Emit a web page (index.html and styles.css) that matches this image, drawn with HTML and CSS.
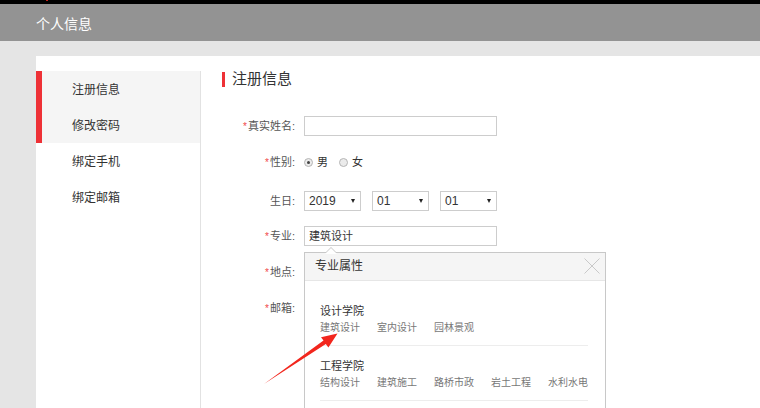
FILE: index.html
```html
<!DOCTYPE html>
<html lang="zh-CN">
<head>
<meta charset="utf-8">
<title>个人信息</title>
<link rel="stylesheet" href="styles.css">
</head>
<body>
<div class="topstrip"><span class="topmark"></span></div>
<header class="header">个人信息</header>
<div class="page">
  <div class="panel">
    <nav class="sidebar">
      <a class="nav-item active">注册信息</a>
      <a class="nav-item active">修改密码</a>
      <a class="nav-item">绑定手机</a>
      <a class="nav-item">绑定邮箱</a>
    </nav>
    <main class="main">
      <h2 class="title"><span class="title-bar"></span>注册信息</h2>
      <div class="form">
        <div class="row">
          <label class="label"><span class="star">*</span>真实姓名:</label>
          <div class="input"></div>
        </div>
        <div class="row">
          <label class="label"><span class="star">*</span>性别:</label>
          <div class="radios">
            <span class="radio checked"></span><span class="radio-text">男</span>
            <span class="radio"></span><span class="radio-text">女</span>
          </div>
        </div>
        <div class="row row-birth">
          <label class="label">生日:</label>
          <div class="selects">
            <div class="select"><span>2019</span><i class="caret"></i></div>
            <div class="select"><span>01</span><i class="caret"></i></div>
            <div class="select"><span>01</span><i class="caret"></i></div>
          </div>
        </div>
        <div class="row">
          <label class="label"><span class="star">*</span>专业:</label>
          <div class="field">
            <div class="input">建筑设计</div>
            <div class="popup">
              <div class="popup-head">专业属性
                <svg class="close" width="16" height="16" viewBox="0 0 16 16"><path d="M0.5 0.5 L15.5 15.5 M15.5 0.5 L0.5 15.5" stroke="#c9c9c9" stroke-width="1" fill="none"/></svg>
              </div>
              <div class="popup-body">
                <div class="group">
                  <div class="group-title">设计学院</div>
                  <div class="group-items">
                    <span class="item">建筑设计</span><span class="item">室内设计</span><span class="item">园林景观</span>
                  </div>
                </div>
                <div class="group">
                  <div class="group-title">工程学院</div>
                  <div class="group-items">
                    <span class="item">结构设计</span><span class="item">建筑施工</span><span class="item">路桥市政</span><span class="item">岩土工程</span><span class="item">水利水电</span>
                  </div>
                </div>
              </div>
            </div>
          </div>
        </div>
        <div class="row">
          <label class="label"><span class="star">*</span>地点:</label>
        </div>
        <div class="row">
          <label class="label"><span class="star">*</span>邮箱:</label>
        </div>
      </div>
    </main>
  </div>
</div>
<svg class="annot" width="760" height="408" viewBox="0 0 760 408">
  <polygon points="264,384 323.5,340.6 321,337.2 337.5,333.5 328.4,347.6 325.8,344.1" fill="#f2261d"/>
</svg>
</body>
</html>
```

FILE: styles.css
```css
html, body {
  margin: 0;
  padding: 0;
  overflow: hidden;
  height: 408px;
}
body {
  background: #e5e5e5;
  font-family: "Liberation Sans", "Noto Sans CJK SC", sans-serif;
  color: #333;
  position: relative;
}
.topstrip {
  height: 4px;
  background: #000;
  display: flex;
}
.topmark {
  width: 2px;
  height: 1px;
  margin-left: 46px;
  background: #c0201a;
}
.header {
  height: 37px;
  line-height: 40px;
  background: #939393;
  color: #fff;
  font-size: 14px;
  padding-left: 36px;
  overflow: hidden;
}
.page {
  padding: 15px 0 0 36px;
}
.panel {
  background: #fff;
  display: flex;
  padding-top: 15px;
  height: 337px;
  overflow: hidden;
}
.sidebar {
  width: 164px;
  border-right: 1px solid #e2e2e2;
  display: flex;
  flex-direction: column;
}
.nav-item {
  height: 36px;
  line-height: 38px;
  padding-left: 36px;
  font-size: 12px;
  color: #333;
  overflow: hidden;
}
.nav-item.active {
  background: #f5f5f5;
  border-left: 6px solid #ee3136;
  padding-left: 30px;
}
.main {
  flex: 1;
  padding-left: 21px;
}
.title {
  margin: 0;
  display: flex;
  align-items: center;
  height: 16px;
  font-size: 15px;
  font-weight: normal;
  color: #333;
  line-height: 16px;
}
.title-bar {
  width: 3px;
  height: 15px;
  background: #ee3136;
  margin-right: 7px;
}
.form {
  margin-top: 29px;
  margin-left: -21px;
  display: flex;
  flex-direction: column;
}
.row {
  display: flex;
  align-items: center;
  height: 20px;
  margin-bottom: 16px;
}
.row-birth {
  margin-top: 3px;
  margin-bottom: 15px;
}
.label {
  width: 94px;
  text-align: right;
  font-size: 11px;
  color: #555;
  line-height: 20px;
  margin-right: 9px;
  flex: none;
}
.star {
  color: #f04848;
  font-size: 10px;
  margin-right: 1px;
}
.input {
  box-sizing: border-box;
  width: 193px;
  height: 20px;
  border: 1px solid #cdcdcd;
  font-size: 11px;
  line-height: 18px;
  padding-left: 4px;
  color: #333;
}
.radios {
  display: flex;
  align-items: center;
  font-size: 11px;
  color: #333;
}
.radio {
  box-sizing: border-box;
  width: 9px;
  height: 9px;
  border: 1px solid #b5b5b5;
  border-radius: 50%;
  background: #ebebeb;
  display: flex;
  align-items: center;
  justify-content: center;
}
.radio.checked::after {
  content: "";
  width: 3px;
  height: 3px;
  border-radius: 50%;
  background: #444;
}
.radio-text {
  margin-left: 4px;
  margin-right: 11px;
  line-height: 20px;
}
.selects {
  display: flex;
  gap: 11px;
}
.select {
  box-sizing: border-box;
  width: 57px;
  height: 20px;
  border: 1px solid #cdcdcd;
  display: flex;
  align-items: center;
  justify-content: space-between;
  padding: 0 5px 0 4px;
  font-size: 12px;
  color: #333;
}
.caret {
  width: 0;
  height: 0;
  border-left: 2.5px solid transparent;
  border-right: 2.5px solid transparent;
  border-top: 4px solid #222;
}
.field {
  position: relative;
}
.popup {
  position: absolute;
  left: 0;
  top: 26px;
  box-sizing: border-box;
  width: 302px;
  height: 156px;
  overflow: visible;
  border: 1px solid #c8c8c8;
  border-bottom: none;
  background: #fff;
  z-index: 2;
}
.popup::before,
.popup::after {
  content: "";
  position: absolute;
  left: 20px;
  top: -12px;
  border: 6px solid transparent;
  border-bottom-color: #c8c8c8;
}
.popup::after {
  top: -11px;
  border-bottom-color: #fff;
}
.popup-head {
  position: relative;
  height: 27px;
  line-height: 27px;
  background: #f5f5f5;
  border-bottom: 1px solid #e6e6e6;
  padding-left: 10px;
  font-size: 12px;
  color: #333;
}
.close {
  position: absolute;
  right: 5px;
  top: 5px;
}
.popup-body {
  padding: 10px 17px 0 15px;
  height: 118px;
  overflow: hidden;
}
.group {
  padding: 12px 0 10px;
  border-bottom: 1px solid #ededed;
}
.group-title {
  font-size: 11px;
  line-height: 16px;
  color: #333;
}
.group-items {
  display: flex;
  margin-top: 2px;
  line-height: 14px;
  font-size: 10px;
  color: #777;
}
.item {
  width: 57px;
  flex: none;
}
.annot {
  position: absolute;
  left: 0;
  top: 0;
  pointer-events: none;
  z-index: 5;
}
```
